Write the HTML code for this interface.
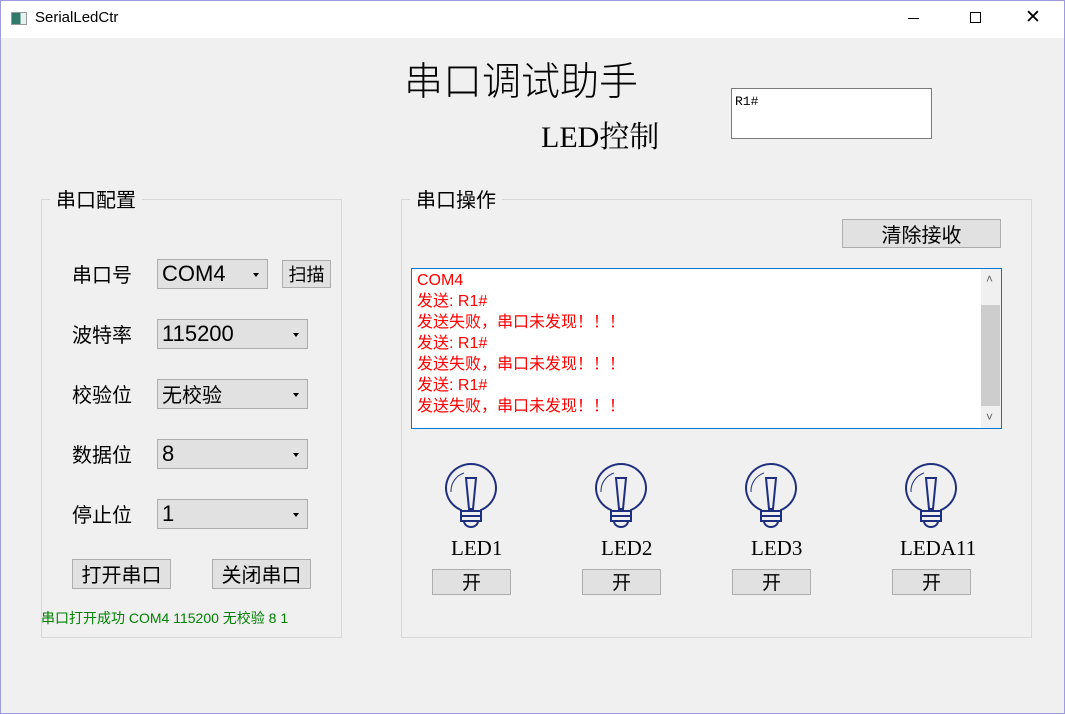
<!DOCTYPE html><html><head><meta charset="utf-8"><style>
*{margin:0;padding:0;box-sizing:border-box}
body{width:1065px;height:714px;overflow:hidden;background:#f0f0f0;font-family:"Liberation Sans","Noto Sans CJK SC",sans-serif;position:relative}
.win{position:absolute;left:0;top:0;width:1065px;height:714px;border:1px solid #a09be0}
.tb{position:absolute;left:1px;top:1px;width:1063px;height:37px;background:#fff}
.a{position:absolute}
.cjk{font-family:"Noto Sans CJK SC","WenQuanYi Zen Hei",sans-serif}
.serif{font-family:"Liberation Serif","Noto Serif CJK SC",serif}
.grp{position:absolute;border:1px solid #d8d8d8}
.lg{position:absolute;background:#f0f0f0;padding:0 6px;font-size:20px;line-height:24px;color:#000}
.lbl{position:absolute;font-size:20px;color:#000;line-height:24px}
.cb{position:absolute;width:151px;height:30px;background:#e1e1e1;border:1px solid #adadad;font-size:22px;line-height:28px;padding-left:4px}
.cb:after{content:"";position:absolute;right:8px;top:13px;border-left:3px solid transparent;border-right:3px solid transparent;border-top:4px solid #000}
.btn{position:absolute;background:#e1e1e1;border:1px solid #adadad;text-align:center;color:#000}
.log div{height:21px;line-height:21px}
</style></head><body>
<div class="win"></div>
<div class="tb"></div>
<div class="a" style="left:11px;top:12px;width:16px;height:13px;border:1px solid #999;background:linear-gradient(90deg,#2f7a6a 0 60%,#e8f0f0 60%)"></div>
<div class="a" style="left:35px;top:9px;font-size:15px;color:#000">SerialLedCtr</div>
<div class="a" style="left:908px;top:18px;width:11px;height:1px;background:#000"></div>
<div class="a" style="left:970px;top:12px;width:11px;height:11px;border:1px solid #000"></div>
<div class="a" style="left:1025px;top:8px;font-size:19px;line-height:20px;color:#000">✕</div>

<div class="a cjk" style="left:404px;top:55px;font-size:39px;line-height:48px;font-weight:300">串口调试助手</div>
<div class="a serif" style="left:541px;top:120px;font-size:30px;line-height:36px">LED控制</div>
<div class="a" style="left:731px;top:88px;width:201px;height:51px;background:#fff;border:1px solid #7a7a7a;font-family:'Liberation Mono',monospace;font-size:13px;padding:5px 3px">R1#</div>

<div class="grp" style="left:41px;top:199px;width:301px;height:439px"></div>
<div class="lg cjk" style="left:50px;top:187px">串口配置</div>
<div class="lbl cjk" style="left:72px;top:262px">串口号</div>
<div class="cb" style="left:157px;top:259px;width:111px">COM4</div>
<div class="btn cjk" style="left:282px;top:260px;width:49px;height:28px;font-size:18px;line-height:26px">扫描</div>
<div class="lbl cjk" style="left:72px;top:322px">波特率</div>
<div class="cb" style="left:157px;top:319px">115200</div>
<div class="lbl cjk" style="left:72px;top:382px">校验位</div>
<div class="cb cjk" style="left:157px;top:379px;font-size:20px">无校验</div>
<div class="lbl cjk" style="left:72px;top:442px">数据位</div>
<div class="cb" style="left:157px;top:439px">8</div>
<div class="lbl cjk" style="left:72px;top:502px">停止位</div>
<div class="cb" style="left:157px;top:499px">1</div>
<div class="btn cjk" style="left:72px;top:559px;width:99px;height:30px;font-size:20px;line-height:28px">打开串口</div>
<div class="btn cjk" style="left:212px;top:559px;width:99px;height:30px;font-size:20px;line-height:28px">关闭串口</div>
<div class="a" style="left:41px;top:608px;font-size:14px;color:#008000">串口打开成功 COM4 115200 无校验 8 1</div>

<div class="grp" style="left:401px;top:199px;width:631px;height:439px"></div>
<div class="lg cjk" style="left:410px;top:187px">串口操作</div>
<div class="btn cjk" style="left:842px;top:219px;width:159px;height:29px;font-size:20px;line-height:27px">清除接收</div>
<div class="a" style="left:411px;top:268px;width:591px;height:161px;background:#fff;border:1px solid #0078d7"></div>
<div class="a log" style="left:417px;top:270px;color:#f00;font-size:16px">
<div>COM4</div><div>发送: R1#</div><div>发送失败，串口未发现！！！</div><div>发送: R1#</div><div>发送失败，串口未发现！！！</div><div>发送: R1#</div><div>发送失败，串口未发现！！！</div></div>
<div class="a" style="left:981px;top:269px;width:20px;height:159px;background:#f0f0f0"></div>
<div class="a" style="left:981px;top:305px;width:19px;height:101px;background:#cdcdcd"></div>
<div class="a" style="left:986px;top:272px;font-size:12px;color:#606060">˄</div>
<div class="a" style="left:986px;top:410px;font-size:12px;color:#606060">˅</div>

<svg class="a" style="left:0;top:0" width="1065" height="714">
<defs><g id="b" fill="none" stroke="#1f2f7f" stroke-width="2">
<path d="M-10 20 A25 24 0 1 1 10 20 L10 31 L-10 31 Z"/>
<path d="M-20 2 A19 19 0 0 1 -7 -17" stroke-width="1"/>
<path d="M-5 -12 L5 -12 L2 19 L-2 19 Z"/>
<line x1="-10" y1="21" x2="10" y2="21"/><line x1="-10" y1="26" x2="10" y2="26"/>
<path d="M-7 31 A7 6 0 0 0 7 31"/></g></defs>
<use href="#b" x="471" y="490"/><use href="#b" x="621" y="490"/><use href="#b" x="771" y="490"/><use href="#b" x="931" y="490"/>
</svg>
<div class="a serif" style="left:451px;top:536px;font-size:21px">LED1</div>
<div class="a serif" style="left:601px;top:536px;font-size:21px">LED2</div>
<div class="a serif" style="left:751px;top:536px;font-size:21px">LED3</div>
<div class="a serif" style="left:900px;top:536px;font-size:21px">LEDA11</div>
<div class="btn cjk" style="left:432px;top:569px;width:79px;height:26px;font-size:19px;line-height:24px">开</div>
<div class="btn cjk" style="left:582px;top:569px;width:79px;height:26px;font-size:19px;line-height:24px">开</div>
<div class="btn cjk" style="left:732px;top:569px;width:79px;height:26px;font-size:19px;line-height:24px">开</div>
<div class="btn cjk" style="left:892px;top:569px;width:79px;height:26px;font-size:19px;line-height:24px">开</div>
</body></html>
